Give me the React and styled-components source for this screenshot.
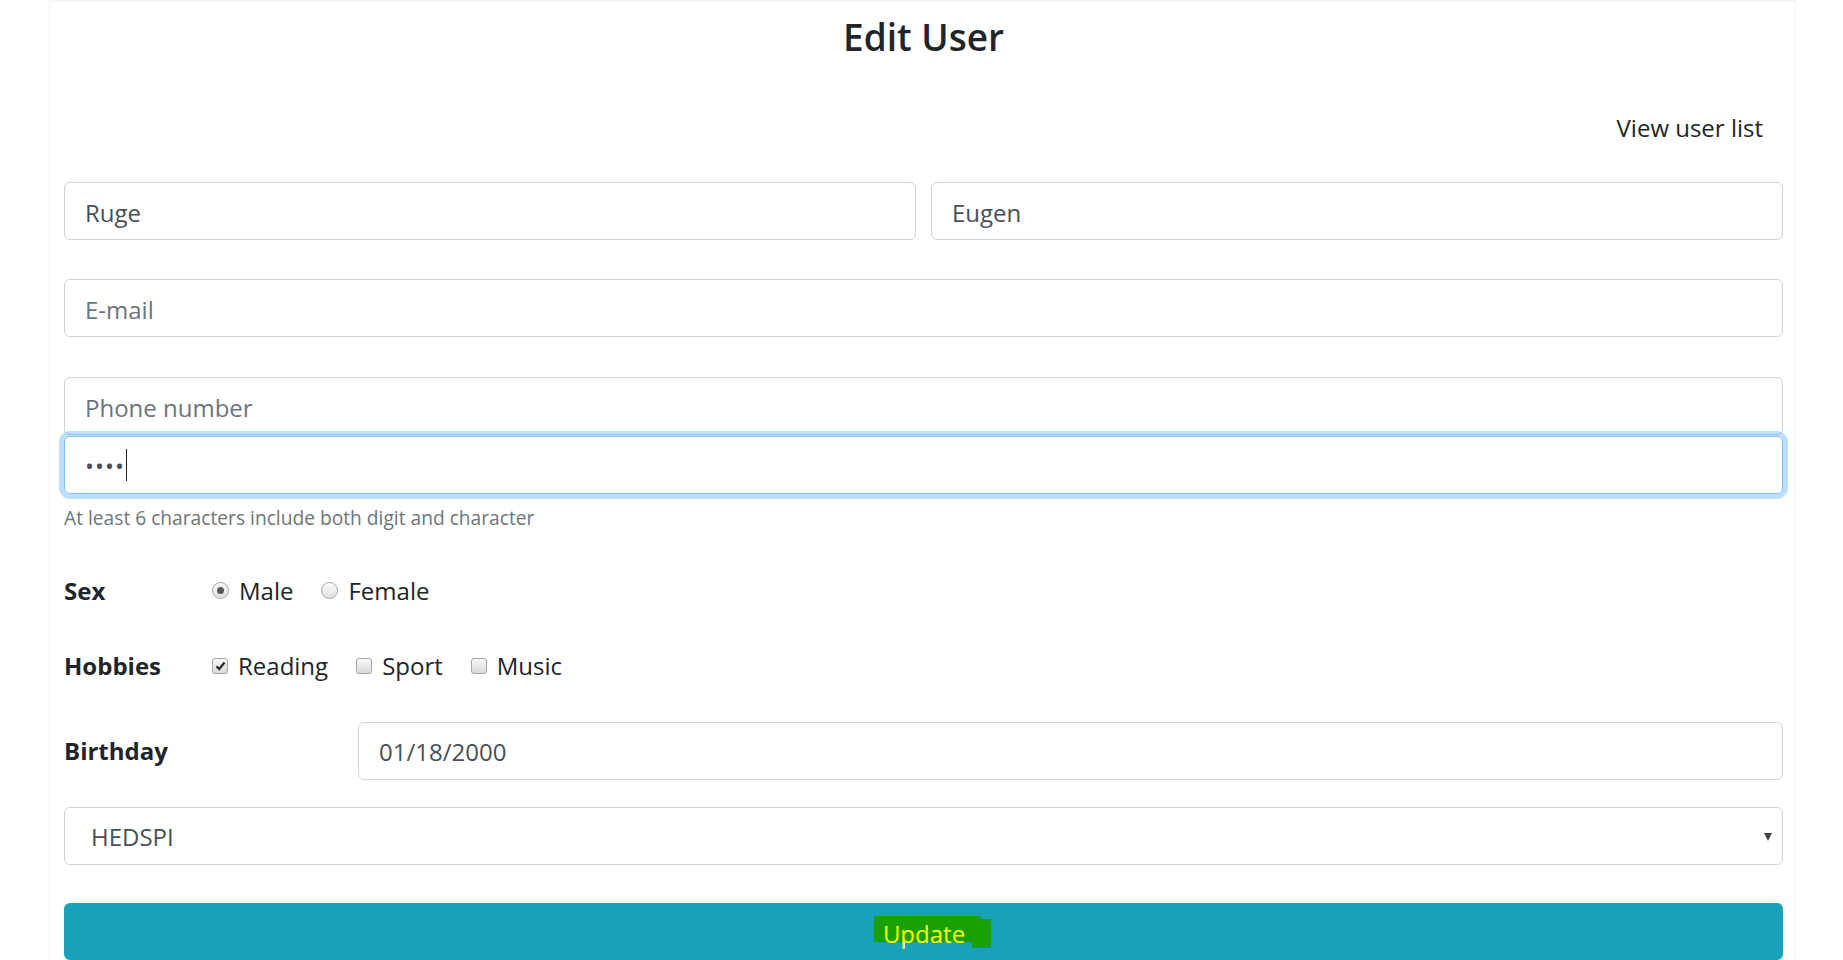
import React from 'react';
import styled, { createGlobalStyle } from 'styled-components';

const GlobalStyle = createGlobalStyle`
  * { box-sizing: border-box; }
  body {
    margin: 0;
    background: #fff;
    color: #212529;
    font-family: 'Open Sans', 'Noto Sans', sans-serif;
  }
`;

const Page = styled.div`
  padding: 0 47px 0 49px;
`;

const Card = styled.div`
  min-height: 960px;
  border-left: 1px solid #f3f3f4;
  border-right: 1px solid #f3f3f4;
  border-top: 2px solid #f5f5f6;
  padding: 0 12px 0 14px;
`;

const Title = styled.h2`
  margin: 12px 0 0;
  font-size: 37px;
  font-weight: 600;
  line-height: 46px;
  text-align: center;
`;

const TopBar = styled.div`
  display: flex;
  justify-content: flex-end;
  margin-top: 50px;
  padding-right: 20px;
`;

const ListLink = styled.a`
  color: #212529;
  font-size: 24px;
  line-height: 36px;
  text-decoration: none;
`;

const Form = styled.form`
  display: flex;
  flex-direction: column;
  margin-top: 36px;
`;

const Group = styled.div`
  margin-top: ${(p) => p.$mt || 0}px;
`;

const NameRow = styled.div`
  display: grid;
  grid-template-columns: 1fr 1fr;
  gap: 15px;
`;

const TextInput = styled.input`
  display: block;
  width: 100%;
  height: 58px;
  padding: 2px 20px 0;
  border: 1px solid #ced4da;
  border-radius: 6px;
  background: #fff;
  color: #495057;
  font-family: inherit;
  font-size: 24px;
  outline: none;

  &::placeholder {
    color: #6c757d;
  }
`;

const PasswordField = styled.div`
  display: flex;
  align-items: center;
  height: 58px;
  padding: 0 20px;
  border: 1px solid #80bdff;
  border-radius: 6px;
  box-shadow: 0 0 0 5px rgba(0, 123, 255, 0.25);
  color: #495057;
  font-size: 24px;
  letter-spacing: 1px;
`;

const Caret = styled.span`
  width: 1px;
  height: 32px;
  margin-left: 1px;
  background: #222;
`;

const HelpText = styled.small`
  display: block;
  margin-top: 10px;
  color: #6c757d;
  font-size: 19.2px;
  line-height: 28.8px;
`;

const ChoiceRow = styled.div`
  display: grid;
  grid-template-columns: ${(p) => p.$labelWidth}px 1fr;
  align-items: center;
  min-height: 36px;
`;

const RowLabel = styled.label`
  font-size: 24px;
  font-weight: 700;
  line-height: 36px;
`;

const Options = styled.div`
  display: flex;
  align-items: center;
`;

const Option = styled.label`
  display: flex;
  align-items: center;
  gap: 10px;
  margin-right: 28px;
  font-size: 24px;
  line-height: 36px;
`;

const RadioMark = styled.span`
  position: relative;
  width: 17px;
  height: 17px;
  border: 1px solid #a6a6a6;
  border-radius: 50%;
  background: linear-gradient(#fbfbfb, #dedede);

  &::after {
    content: '';
    display: ${(p) => (p.$checked ? 'block' : 'none')};
    position: absolute;
    left: 4px;
    top: 4px;
    width: 7px;
    height: 7px;
    border-radius: 50%;
    background: #555;
  }
`;

const CheckMark = styled.span`
  display: flex;
  align-items: center;
  justify-content: center;
  width: 16px;
  height: 16px;
  border: 1px solid #a6a6a6;
  border-radius: 3px;
  background: linear-gradient(#f8f8f8, #dadada);
`;

const SelectWrap = styled.div`
  position: relative;
`;

const Select = styled.select`
  display: block;
  width: 100%;
  height: 58px;
  padding: 2px 26px 0;
  border: 1px solid #ced4da;
  border-radius: 6px;
  background: #fff;
  color: #495057;
  font-family: inherit;
  font-size: 24px;
  appearance: none;
  outline: none;
`;

const Arrow = styled.span`
  position: absolute;
  right: 11px;
  top: 26px;
  border-left: 4.5px solid transparent;
  border-right: 4.5px solid transparent;
  border-top: 8px solid #3f444a;
  pointer-events: none;
`;

const SubmitButton = styled.button`
  display: flex;
  justify-content: center;
  align-items: flex-start;
  width: 100%;
  height: 57px;
  padding: 13px 0 0;
  border: none;
  border-radius: 6px;
  background: #17a2b8;
  font-family: inherit;
`;

const Highlight = styled.span`
  position: relative;
  display: inline-block;
  height: 26px;
  margin-left: 8px;
  padding: 0 16px 0 9px;
  background: #1aa100;
  color: #ffff00;
  font-size: 24px;
  line-height: 36px;

  &::after {
    content: '';
    position: absolute;
    left: 98px;
    top: 3px;
    width: 19px;
    height: 29px;
    background: #1aa100;
  }

  &::before {
    content: '';
    position: absolute;
    left: 29px;
    top: 26px;
    width: 2px;
    height: 6px;
    background: #fff;
    z-index: 1;
  }
`;

const HighlightText = styled.span`
  position: relative;
  z-index: 2;
`;

const hobbies = [
  { name: 'Reading', checked: true },
  { name: 'Sport', checked: false },
  { name: 'Music', checked: false },
];

function Tick() {
  return (
    <svg width="11" height="10" viewBox="0 0 11 10">
      <path d="M1.5 5.2 L4.2 8 L9.5 1.5" fill="none" stroke="#2b2b2b" strokeWidth="2.2" />
    </svg>
  );
}

export default function App() {
  return (
    <Page>
      <GlobalStyle />
      <Card>
        <Title>Edit User</Title>
        <TopBar>
          <ListLink href="#list">View user list</ListLink>
        </TopBar>
        <Form onSubmit={(e) => e.preventDefault()}>
          <NameRow>
            <TextInput defaultValue="Ruge" />
            <TextInput defaultValue="Eugen" />
          </NameRow>
          <Group $mt={39}>
            <TextInput placeholder="E-mail" />
          </Group>
          <Group $mt={40}>
            <TextInput placeholder="Phone number" />
          </Group>
          <Group $mt={1}>
            <PasswordField>
              <span>••••</span>
              <Caret />
            </PasswordField>
            <HelpText>At least 6 characters include both digit and character</HelpText>
          </Group>
          <Group $mt={40}>
            <ChoiceRow $labelWidth={148}>
              <RowLabel>Sex</RowLabel>
              <Options>
                <Option>
                  <RadioMark $checked />
                  Male
                </Option>
                <Option>
                  <RadioMark />
                  Female
                </Option>
              </Options>
            </ChoiceRow>
          </Group>
          <Group $mt={39}>
            <ChoiceRow $labelWidth={148}>
              <RowLabel>Hobbies</RowLabel>
              <Options>
                {hobbies.map((h) => (
                  <Option key={h.name}>
                    <CheckMark>{h.checked ? <Tick /> : null}</CheckMark>
                    {h.name}
                  </Option>
                ))}
              </Options>
            </ChoiceRow>
          </Group>
          <Group $mt={38}>
            <ChoiceRow $labelWidth={294}>
              <RowLabel>Birthday</RowLabel>
              <TextInput defaultValue="01/18/2000" />
            </ChoiceRow>
          </Group>
          <Group $mt={27}>
            <SelectWrap>
              <Select defaultValue="HEDSPI">
                <option value="HEDSPI">HEDSPI</option>
              </Select>
              <Arrow />
            </SelectWrap>
          </Group>
          <Group $mt={38}>
            <SubmitButton type="submit">
              <Highlight>
                <HighlightText>Update</HighlightText>
              </Highlight>
            </SubmitButton>
          </Group>
        </Form>
      </Card>
    </Page>
  );
}
